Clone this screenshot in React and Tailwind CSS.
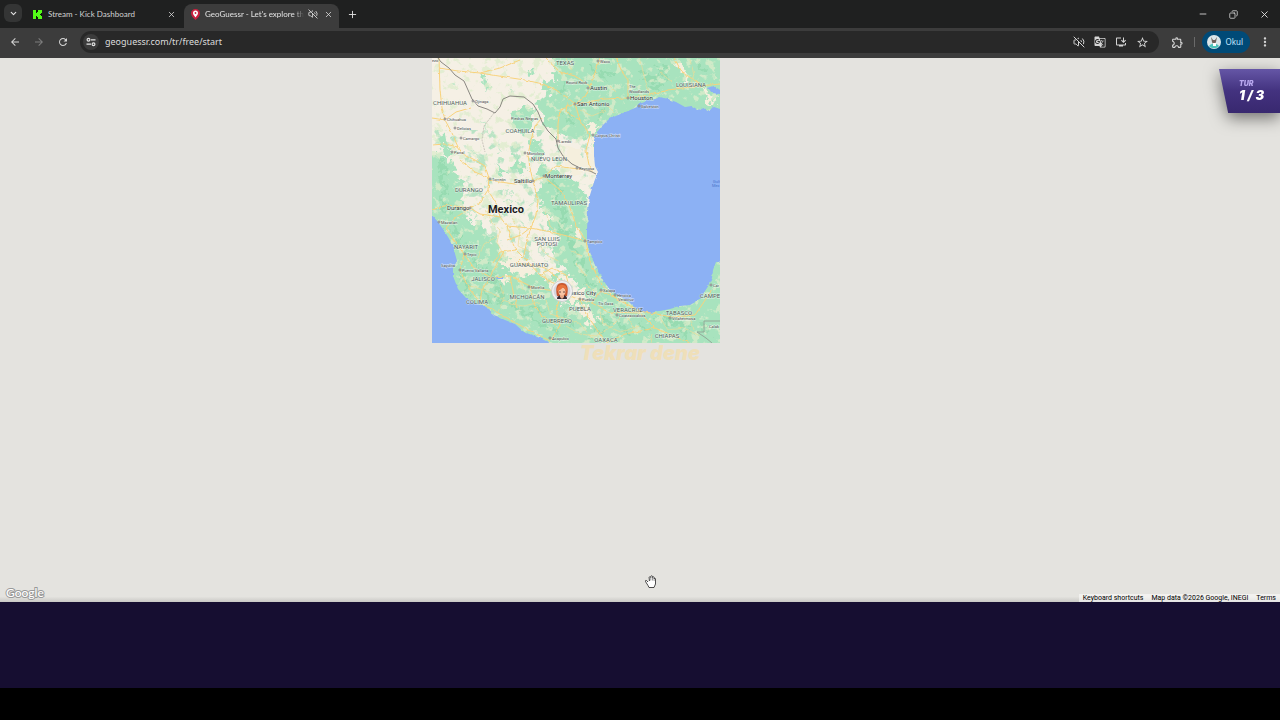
// App.jsx - browser window with the GeoGuessr result map
import { ChevronDown, Copy, Minus, Plus, VolumeOff, X } from 'lucide-react'
import {
  MdArrowBack,
  MdArrowForward,
  MdGTranslate,
  MdInstallDesktop,
  MdMoreVert,
  MdOutlineExtension,
  MdRefresh,
  MdStarOutline,
} from 'react-icons/md'

const states = [
  { name: 'TEXAS', x: 565, y: 65 },
  { name: 'LOUISIANA', x: 691, y: 87 },
  { name: 'CHIHUAHUA', x: 450, y: 105 },
  { name: 'COAHUILA', x: 520, y: 133 },
  { name: 'NUEVO LEON', x: 549, y: 161 },
  { name: 'DURANGO', x: 469, y: 192 },
  { name: 'TAMAULIPAS', x: 569, y: 205 },
  { name: 'SAN LUIS', x: 547, y: 241 },
  { name: 'POTOSI', x: 547, y: 246 },
  { name: 'NAYARIT', x: 466, y: 249 },
  { name: 'GUANAJUATO', x: 529, y: 267 },
  { name: 'JALISCO', x: 483, y: 281 },
  { name: 'MICHOACÁN', x: 527, y: 299 },
  { name: 'COLIMA', x: 477, y: 304 },
  { name: 'GUERRERO', x: 557, y: 323 },
  { name: 'PUEBLA', x: 580, y: 311 },
  { name: 'VERACRUZ', x: 628, y: 312 },
  { name: 'TABASCO', x: 679, y: 315 },
  { name: 'CHIAPAS', x: 667, y: 338 },
  { name: 'OAXACA', x: 606, y: 342 },
  { name: 'CAMPE', x: 710, y: 298 },
]

const cities = [
  { name: 'Austin', x: 590, y: 90, dot: 588 },
  { name: 'San Antonio', x: 577, y: 106, dot: 575 },
  { name: 'Houston', x: 630, y: 100, dot: 628 },
  { name: 'Saltillo', x: 514, y: 183, dot: 533 },
  { name: 'Monterrey', x: 545, y: 178, dot: 544 },
  { name: 'Durango', x: 447, y: 210, dot: 470 },
  { name: 'Mexico City', x: 565, y: 295 },
]

const towns = [
  { name: 'ezo', x: 432, y: 62 },
  { name: 'Waco', x: 600, y: 63, dot: 598 },
  { name: 'Round Rock', x: 566, y: 84 },
  { name: 'The', x: 629, y: 88 },
  { name: 'Woodlands', x: 629, y: 93 },
  { name: 'Galveston', x: 641, y: 108, dot: 639 },
  { name: 'Corpus Christi', x: 595, y: 137, dot: 593 },
  { name: 'Ojinaga', x: 475, y: 103, dot: 473 },
  { name: 'Chihuahua', x: 447, y: 121, dot: 445 },
  { name: 'Delicias', x: 457, y: 130, dot: 455 },
  { name: 'Camargo', x: 463, y: 140, dot: 461 },
  { name: 'Parral', x: 454, y: 154, dot: 452 },
  { name: 'Piedras Negras', x: 511, y: 120 },
  { name: 'Laredo', x: 559, y: 143, dot: 558 },
  { name: 'Monclova', x: 527, y: 155, dot: 525 },
  { name: 'Reynosa', x: 579, y: 170, dot: 577 },
  { name: 'Torreón', x: 492, y: 181, dot: 490 },
  { name: 'Mazatlan', x: 441, y: 224, dot: 439 },
  { name: 'Tampico', x: 587, y: 243, dot: 585 },
  { name: 'Tepic', x: 467, y: 256, dot: 465 },
  { name: 'Sayulita', x: 441, y: 267 },
  { name: 'Puerto Vallarta', x: 462, y: 272, dot: 460 },
  { name: 'Morelia', x: 531, y: 289, dot: 529 },
  { name: 'Puebla', x: 582, y: 301, dot: 580 },
  { name: 'Xalapa', x: 603, y: 292, dot: 601 },
  { name: 'Heroica', x: 617, y: 297, dot: 615 },
  { name: 'Veracruz', x: 618, y: 301 },
  { name: 'Tlx Oaxa', x: 598, y: 305 },
  { name: 'Coatzacoalcos', x: 619, y: 317, dot: 617 },
  { name: 'Villahermosa', x: 672, y: 320, dot: 670 },
  { name: 'Acapulco', x: 552, y: 340, dot: 550 },
  { name: 'Car', x: 713, y: 287, dot: 711 },
  { name: 'Calak', x: 709, y: 328 },
]

const roads = [
  'M439 58 L440 90 442 108 445 120 452 133 458 147 463 154 475 160 485 166 489 178 488 190 478 205 470 208 455 218 446 228',
  'M439 68 L458 71 480 73 500 68 520 60',
  'M480 73 L505 77 525 80 543 84 556 90 568 98 575 104',
  'M545 58 L560 72 575 76 590 86 585 97 575 104 560 110 558 125 558 142',
  'M600 58 L596 70 590 86',
  'M616 58 L622 72 628 80 628 98 605 99 575 104',
  'M628 98 L650 95 668 90 690 87 720 84',
  'M674 58 L682 72 700 84',
  'M575 104 L580 120 590 135 586 150 590 170',
  'M445 120 L456 112 470 108',
  'M432 118 L445 120 M432 145 L445 144 458 147',
  'M488 180 L500 182 515 184 533 181 544 177 556 166 578 169 592 171',
  'M533 181 L530 168 528 155 531 140 535 126 541 119',
  'M544 177 L560 190 569 205 576 225 586 241 590 262 602 285 615 298 640 311 672 317 695 315 712 290',
  'M488 190 L497 205 500 217 507 226 511 240 516 250 528 262 540 275 562 288',
  'M533 181 L538 200 536 215 531 228 527 240 524 255 516 263',
  'M470 208 L480 214 500 217 M507 226 L530 228 552 232 586 241',
  'M446 228 L456 243 464 254 474 268 490 277 510 276 530 286 548 290 562 292',
  'M464 254 L460 271 470 290 480 302 500 314 525 328 550 341',
  'M562 292 L575 298 592 303 608 312 640 313',
  'M562 292 L556 310 560 325 551 340 M580 300 L588 316 597 330 606 343',
  'M490 277 L498 262 505 250 M516 263 L530 265 545 268 560 280',
  'M510 276 L513 292 517 308 M530 286 L533 302 541 315 556 325',
  'M640 313 L655 328 676 337 690 343 M490 277 L482 290 480 302',
  'M432 210 L447 205 470 208 M489 178 L475 172 460 160',
  'M568 98 L566 112 580 120 M606 343 L625 334 655 328',
  'M530 228 L521 235 507 240 M540 275 L552 268 566 275 570 290',
  'M592 303 L601 291 615 298 M516 250 L500 252 493 263',
]

const minorRoads = [
  'M486 210 L492 222 500 230 497 242 504 256 M512 218 L520 230 518 246 530 252 M540 246 L548 256 560 262 M498 236 L484 244 478 258 M546 212 L550 226 560 236',
  'M470 286 L484 290 498 296 510 304 524 306 540 302 M500 284 L504 298 498 312 M546 300 L550 314 564 318 580 324 592 338 M524 290 L520 280 M548 284 L544 272',
  'M566 326 L580 334 596 336 612 326 620 318 M600 312 L604 324 620 332 640 326 M660 318 L668 330 684 328 700 336 M628 318 L634 328 M650 343 L652 334 M690 316 L694 330 M586 284 L594 292 M576 264 L586 276 M570 250 L582 256',
  'M566 58 L572 70 M610 86 L616 92 M640 58 L644 76 650 95 M660 72 L672 82 M690 60 L694 74 690 87 M606 104 L614 112 M580 110 L592 116 606 110',
]

const woods = [
  // Texas and Louisiana
  'M550 58 L556 68 552 76 558 84 548 80 542 84 549 91 541 98 537 106 543 111 545 121 551 128 557 136 565 133 575 140 588 138 594 148 612 150 730 150 730 50 550 50 Z',
  // Sierra Madre Occidental down to the coast
  'M425 150 L440 154 450 162 456 172 462 182 464 196 460 205 466 212 472 222 482 222 486 232 492 238 496 248 503 252 510 262 520 268 532 270 545 278 560 275 566 290 580 290 588 300 576 306 560 302 560 355 425 355 Z',
  // Sierra Madre Oriental
  'M541 160 L551 168 558 170 566 178 578 184 588 196 592 240 610 290 660 305 700 290 705 255 730 250 730 355 550 355 557 305 575 306 582 292 574 282 566 268 555 262 550 250 561 246 556 231 548 230 548 216 540 212 542 200 536 192 542 184 538 172 Z',
  'M513 110 L530 108 535 116 531 130 519 133 511 126 Z',
  'M528 138 L540 142 543 155 537 161 531 153 Z',
  'M514 153 L520 162 528 170 524 176 515 168 Z',
  'M446 130 L448 144 453 155 446 156 441 140 Z',
  'M494 163 L502 170 508 176 500 174 Z',
  'M484 75 L489 82 486 91 483 83 Z',
  'M527 70 L534 72 530 78 Z',
]

const clearings = [
  'M592 140 L600 136 594 160 596 174 590 178 585 165 589 154 Z',
  'M565 146 L578 144 583 158 592 170 580 176 570 170 562 158 Z',
  'M676 60 L685 70 690 80 682 76 Z',
  'M700 90 L710 94 716 104 708 102 Z',
  'M588 125 L598 124 596 134 588 136 Z',
  'M548 282 L566 278 574 290 582 288 586 298 574 302 562 298 550 290 Z',
  'M500 262 L514 256 530 264 538 274 520 276 508 270 Z',
  'M576 304 L588 308 598 322 594 330 584 318 Z',
  'M575 225 L582 232 580 240 574 236 Z',
  'M500 278 L508 277 509 283 502 284 Z',
]

const ranges = [
  'M438 160 L446 172 440 180 446 190 440 200 448 214 M452 226 L460 234 458 242 470 250 M474 262 L485 268 500 290 496 302 M510 300 L522 312 540 322 560 334',
  'M552 178 L560 190 556 200 564 212 562 228 570 240 576 258 584 272 592 288 M600 318 L618 324 630 334 M640 322 L650 332 M655 318 L690 326 M602 330 L590 338',
  'M590 66 L600 76 612 74 M606 108 L596 118 M640 70 L650 80 662 74 M660 64 L668 78 M698 64 L708 72 M560 92 L566 84 M566 112 L572 124 M650 88 L664 86',
  'M462 276 L470 284 466 294 M484 292 L490 300 M530 306 L546 312 M564 312 L574 326 M700 322 L710 334 M680 330 L688 338',
]

function WorldMap() {
  return (
    <svg viewBox="432 58 288 285" className="block h-[285px] w-72" role="img" aria-label="Map of Mexico">
      <defs>
        <filter id="rough" x="-5%" y="-5%" width="110%" height="110%">
          <feTurbulence type="fractalNoise" baseFrequency="0.14" numOctaves="3" seed="4" />
          <feDisplacementMap in="SourceGraphic" scale="16" xChannelSelector="R" yChannelSelector="G" />
        </filter>
        <filter id="coast" x="-5%" y="-5%" width="110%" height="110%">
          <feTurbulence type="fractalNoise" baseFrequency="0.2" numOctaves="2" seed="9" />
          <feDisplacementMap in="SourceGraphic" scale="3" xChannelSelector="R" yChannelSelector="G" />
        </filter>
        {/* scattered vegetation, then pale dry spots inside the woods */}
        <filter id="scrub" x="0" y="0" width="100%" height="100%" colorInterpolationFilters="sRGB">
          <feTurbulence type="fractalNoise" baseFrequency="0.09" numOctaves="4" seed="12" />
          <feColorMatrix values="0 0 0 0 0.72  0 0 0 0 0.89  0 0 0 0 0.77  9 0 0 0 -5.3" />
        </filter>
        <filter id="dry" x="0" y="0" width="100%" height="100%" colorInterpolationFilters="sRGB">
          <feTurbulence type="fractalNoise" baseFrequency="0.12" numOctaves="4" seed="31" />
          <feColorMatrix values="0 0 0 0 0.87  0 0 0 0 0.93  0 0 0 0 0.8  0 9 0 0 -5.1" />
        </filter>
      </defs>
      <rect x="432" y="58" width="288" height="285" fill="#f5f0e5" />
      <rect x="432" y="130" width="288" height="213" filter="url(#scrub)" />
      <g filter="url(#rough)">
        {woods.map((d) => <path key={d} d={d} fill="#a8e3be" />)}
        {ranges.map((d) => <path key={d} d={d} fill="none" stroke="#86d3a4" strokeWidth="4" opacity="0.5" />)}
      </g>
      <rect x="432" y="58" width="288" height="285" filter="url(#dry)" opacity="0.75" />
      <g filter="url(#rough)">
        {clearings.map((d) => <path key={d} d={d} fill="#f5efdd" />)}
        <g fill="none" stroke="#c9e8cd" strokeWidth="2">
          <path d="M470 150 L480 158 M500 190 L514 194 M505 200 L520 206 M540 200 L530 204 M466 206 L480 222 M486 232 L494 240 M496 142 L500 150" />
          <path d="M540 250 L548 258 M520 220 L526 230 M532 240 L540 244 M484 122 L487 134 M509 90 L514 94 M570 90 L566 96 M454 84 L456 90" />
        </g>
      </g>

      {/* Pacific and Gulf */}
      <g fill="#8cb1f4" filter="url(#coast)">
        <path d="M425 208 L432 215 438 222 445 232 451 242 454 250 457 261 453 268 453 276 458 289 466 298 478 304 488 308 494 315 505 320 515 324 524 332 540 338 552 344 552 355 425 355 Z" />
        <path d="M730 105 L720 109 714 107 710 111 704 108 698 110 692 106 685 107 676 102 668 99 660 97 655 99 645 101 638 103 637 107 628 111 618 115 609 119 602 126 597 132 594 140 594 156 595 166 598 172 594 182 590 195 588 210 587 230 587 243 592 258 597 270 603 280 610 290 617 295 628 301 635 308 642 312 650 313 660 311 670 309 680 306 690 305 697 301 701 297 707 288 712 278 713 270 716 262 730 260 Z" />
        <path d="M708 88 L714 86 720 90 720 94 712 93 Z M496 277 L503 276 503 279 497 279 Z" />
      </g>

      <g fill="none" stroke="#ecdb96" strokeWidth="0.7" filter="url(#coast)">
        {minorRoads.map((d) => <path key={d} d={d} />)}
      </g>
      <g fill="none" stroke="#f8d27d" strokeWidth="1" strokeLinejoin="round" filter="url(#coast)">
        {roads.map((d) => <path key={d} d={d} />)}
      </g>
      <path
        d="M438 58 L441 62 449 68 455 75 464 81 468 90 472 99 478 106 487 109 495 113 500 107 503 99 510 96 524 97 533 104 538 112 542 122 548 131 556 139 558 148 563 156 572 164 582 169 590 171 596 174"
        fill="none"
        stroke="#8b8882"
        strokeWidth="1"
      />
      <path d="M720 321 L704 321 704 332 697 332 706 338 712 343" fill="none" stroke="#93a897" strokeWidth="1" />
      <path d="M494 113 L484 126 482 140 485 152 M603 290 L594 300" fill="none" stroke="#c9c5bb" strokeWidth="1" strokeDasharray="2 1" />

      <g fontFamily="Roboto, sans-serif" stroke="#ffffff" strokeOpacity="0.6" strokeWidth="1" paintOrder="stroke">
        <g fontSize="6" fill="#4d5c58" textAnchor="middle">
          {states.map((s) => <text key={s.name} x={s.x} y={s.y}>{s.name}</text>)}
        </g>
        <g fontSize="6" fill="#2b2f2e">
          {cities.map((c) => <text key={c.name} x={c.x} y={c.y}>{c.name}</text>)}
        </g>
        <g fontSize="4" fill="#3d4443">
          {towns.map((t) => <text key={t.name} x={t.x} y={t.y}>{t.name}</text>)}
        </g>
        <g fontSize="4" fill="#4a76cc" stroke="none">
          <text x="713" y="183">Gulf</text>
          <text x="712" y="187">Mex</text>
        </g>
        <text x="506" y="213" fontSize="11" fontWeight="700" fill="#1d1d1d" textAnchor="middle">Mexico</text>
      </g>
      <g fill="#ffffff" stroke="#4b4b4b" strokeWidth="0.6">
        {[...cities, ...towns].filter((c) => c.dot).map((c) => (
          <circle key={c.name} cx={c.dot} cy={c.y - 2} r="1" />
        ))}
      </g>

      {/* Player pin */}
      <g>
        <circle cx="562" cy="291" r="10.500" fill="#f2f0f2" stroke="#c4c8c6" strokeWidth="0.8" />
        <circle cx="562" cy="291" r="8.500" fill="#d6d5de" />
        <path d="M557 296 C555 287 557 283 562 283 C567 283 569 287 567 296 Z" fill="#c9582f" />
        <path d="M557 299 C557 296 560 295 562 295 C565 295 567 296 567 299 Z" fill="#3a2c33" />
        <path d="M560 293 H564 V297 L562 299 560 297 Z" fill="#e8a888" />
        <ellipse cx="562" cy="291.500" rx="3.500" ry="4" fill="#f6c3a4" />
        <path d="M557 291 C557 286 560 284 563 285 C566 285 567 288 567 291 C565 290 564 288 563 287 C562 289 560 290 557 291 Z" fill="#e8743d" />
        <circle cx="560" cy="292" r="0.7" fill="#3a2020" />
        <circle cx="564" cy="292" r="0.7" fill="#3a2020" />
      </g>
    </svg>
  )
}

function TabStrip() {
  return (
    <header className="flex h-7 items-stretch bg-[#1f2020] font-[Lato,sans-serif] text-[#e3e3e3]">
      <button aria-label="Search tabs" className="mt-1 ml-1 flex h-[18px] w-[18px] items-center justify-center rounded-md bg-[#343535]">
        <ChevronDown size={9} strokeWidth={3} />
      </button>
      <div className="ml-[5px] flex w-[157px] items-center pr-2 pl-1.5">
        <svg viewBox="0 0 9 9" className="h-[9px] w-[9px] shrink-0">
          <rect width="9" height="9" rx="1" fill="#0b1a08" />
          <path d="M0 0H3V3H4V2H5V0H9V3H8V4H7V5H8V6H9V9H5V7H4V6H3V9H0Z" fill="#53fc18" />
        </svg>
        <button className="ml-1.5 flex-1 text-left text-[8px] leading-3 whitespace-nowrap text-[#d0d1d1]">Stream - Kick Dashboard</button>
        <button aria-label="Close Stream - Kick Dashboard"><X size={9} strokeWidth={2} /></button>
      </div>
      <div className="mt-1 flex w-[155px] items-center rounded-t-lg bg-[#3c3c3c] pr-1.5 pb-1 pl-[7px]">
        <svg viewBox="0 0 9 11" className="h-[11px] w-[9px] shrink-0">
          <path d="M4.500 0C2 0 0 1.800 0 4.200C0 7 2.500 9 4.500 11C6.500 9 9 7 9 4.200C9 1.800 7 0 4.500 0Z" fill="#c9213f" />
          <path d="M4.500 1.500C3 1.500 2 2.600 2 4C2 5.600 3.400 7 4.500 8.400C5.600 7 7 5.600 7 4C7 2.600 6 1.500 4.500 1.500Z" fill="#fff" />
          <circle cx="4.500" cy="4" r="0.9" fill="#c9213f" />
        </svg>
        <button className="ml-[5px] w-[99px] overflow-hidden [mask-image:linear-gradient(to_right,black_90%,transparent)] text-left text-[8px] leading-3 whitespace-nowrap">
          GeoGuessr - Let's explore th
        </button>
        <button aria-label="Unmute tab" className="ml-1"><VolumeOff size={10} strokeWidth={2} /></button>
        <button aria-label="Close GeoGuessr" className="ml-auto"><X size={9} strokeWidth={2} /></button>
      </div>
      <button aria-label="New tab" className="ml-2"><Plus size={11} strokeWidth={2} /></button>
      <div className="ml-auto flex items-center gap-[21px] pr-2.5">
        <button aria-label="Minimize"><Minus size={10} strokeWidth={2} /></button>
        <button aria-label="Restore"><Copy size={9} strokeWidth={2} className="-scale-x-100" /></button>
        <button aria-label="Close window"><X size={11} strokeWidth={2} /></button>
      </div>
    </header>
  )
}

function Toolbar() {
  return (
    <nav className="flex h-[30px] items-center bg-[#3c3c3c] pb-0.5 text-[#d5d5d5]">
      <div className="flex items-center gap-3 pr-[11px] pl-[9px]">
        <button aria-label="Back"><MdArrowBack size={12} /></button>
        <button aria-label="Forward" className="text-[#7d7d7d]"><MdArrowForward size={12} /></button>
        <button aria-label="Reload"><MdRefresh size={12} /></button>
      </div>
      <div className="flex h-[22px] flex-1 items-center rounded-full bg-[#282828] pr-2.5 pl-[3px]">
        <button aria-label="Site information" className="flex h-4 w-4 items-center justify-center rounded-full bg-[#3c3c3c]">
          <svg viewBox="0 0 10 10" className="h-2.5 w-2.5" fill="none" stroke="#e3e3e3" strokeWidth="1.200">
            <circle cx="2.500" cy="2.800" r="1.400" />
            <path d="M5 2.800H9.500M0.500 7.200H5" />
            <circle cx="7.500" cy="7.200" r="1.400" />
          </svg>
        </button>
        <input
          aria-label="Address"
          defaultValue="geoguessr.com/tr/free/start"
          className="ml-1.5 min-w-0 flex-1 bg-transparent text-[9px] leading-4 text-[#dcdcdc] outline-none"
        />
        <div className="flex items-center gap-[9px]">
          <button aria-label="Muted"><VolumeOff size={12} strokeWidth={2} /></button>
          <button aria-label="Translate"><MdGTranslate size={12} /></button>
          <button aria-label="Install"><MdInstallDesktop size={12} /></button>
          <button aria-label="Bookmark"><MdStarOutline size={13} /></button>
        </div>
      </div>
      <div className="flex items-center pr-2 pl-3">
        <button aria-label="Extensions"><MdOutlineExtension size={13} /></button>
        <span className="mr-[7px] ml-2.5 h-2.5 w-px bg-[#6a6a6a]" />
        <button className="flex h-[22px] items-center gap-1 rounded-full bg-[#004a77] pr-[7px] pl-[5px] text-[8px] leading-3 text-[#c2e7ff]">
          <svg viewBox="0 0 14 14" className="h-3.5 w-3.5">
            <circle cx="7" cy="7" r="7" fill="#dbe6ea" />
            <path d="M4 2L6 5H8L10 2L9 7L8 9H6L5 7Z" fill="#6e625c" />
            <path d="M2 11C4 8 10 8 12 11C10 14 4 14 2 11Z" fill="#4cc3bb" />
            <path d="M6 8H9V11H6Z" fill="#fff" />
          </svg>
          Okul
        </button>
        <button aria-label="Menu" className="ml-2"><MdMoreVert size={14} /></button>
      </div>
    </nav>
  )
}

export default function App() {
  return (
    <div className="flex min-h-screen flex-col bg-black font-['Noto_Sans',sans-serif]">
      <TabStrip />
      <Toolbar />

      <main className="relative flex flex-1 flex-col bg-[#e4e3df]">
        <div className="ml-[33.75%]">
          <WorldMap />
        </div>
        <button className="self-center font-[Inter,sans-serif] text-[20px] leading-5 font-black text-[#efdfb9] italic">Tekrar dene</button>

        <footer className="mt-auto flex items-end justify-between bg-linear-to-t from-[#c9c8c5] to-transparent to-30% pl-1.5 font-[Roboto,sans-serif]">
          <a
            href="https://maps.google.com"
            className="font-[Lato,sans-serif] text-[12px] leading-[18px] font-medium text-white [-webkit-text-stroke:2px_#999999] [paint-order:stroke]"
          >
            Google
          </a>
          <div className="flex gap-2 bg-white/50 px-1 text-[7px] leading-[8px] text-black">
            <button>Keyboard shortcuts</button>
            <span>Map data ©2026 Google, INEGI</span>
            <a href="https://www.google.com/intl/en/help/terms_maps/">Terms</a>
          </div>
        </footer>

        {/* Round counter */}
        <div className="absolute top-[11px] right-0 drop-shadow-[0_5px_8px_rgba(0,0,0,0.5)]">
          <div className="h-11 w-[61px] bg-linear-to-b from-[#6556a6] via-[#43327f] to-[#38286f] pt-2.5 pl-5 font-[Inter,sans-serif] text-white italic [clip-path:polygon(0_0,100%_0,100%_100%,15%_100%)]">
            <p className="text-[7px] leading-[9px] font-black text-[#b9a8f0]">TUR</p>
            <p className="text-[13px] leading-[14px] font-black whitespace-nowrap">1 / 3</p>
          </div>
        </div>

        {/* Grab cursor */}
        <svg viewBox="0 0 12 13" className="absolute bottom-[14px] left-[50.4%] h-[13px] w-3">
          <path
            d="M3 7L1.500 5.500C0.500 5 0 6 0.800 7L3 10.500L4 12.500H9L10.500 9V4C10.500 3 9.200 3 9.100 4V2.500C9 1.500 7.600 1.500 7.500 2.500V1.500C7.300 0.500 6 0.500 5.800 1.500V2.500C5.500 1.500 4.200 1.500 4.100 2.500L4.500 6"
            fill="#fff"
            stroke="#222"
            strokeWidth="0.8"
          />
          <path d="M5.800 2.500V5.500M7.500 2.500V5.500M9.100 4V6" stroke="#555" strokeWidth="0.6" />
        </svg>
      </main>

      <div className="h-[86px] bg-[#160e31]" />
      <div className="h-8 bg-black" />
    </div>
  )
}
